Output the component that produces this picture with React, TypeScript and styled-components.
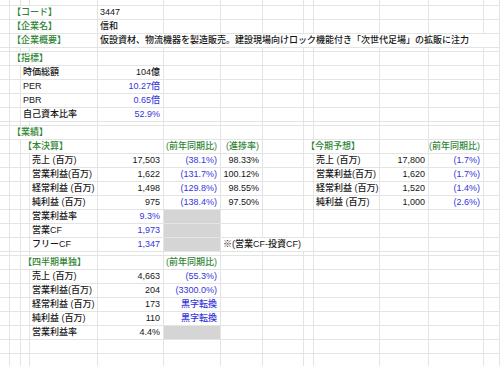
import * as React from "react";
import styled, { createGlobalStyle } from "styled-components";

type Tone = "text" | "green" | "blue";

interface ICell {
  c: number;
  s?: number;
  t?: string;
  right?: boolean;
  tone?: Tone;
  fill?: boolean;
}

interface IRow {
  h: number;
  cells: ICell[];
}

const COLUMNS = "10px 11px 9px 68px 66px 57px 42px 41px 10px 66px 49px 55px 1fr";
const COLUMN_COUNT = 13;

const G = (c: number, t: string, s = 1): ICell => ({ c, s, t, tone: "green" });
const L = (c: number, t: string, s = 1): ICell => ({ c, s, t });
const N = (c: number, t: string, tone: Tone = "text"): ICell => ({ c, t, right: true, tone });
const GR = (c: number, t: string): ICell => ({ c, t, right: true, tone: "green" });
const GRAY = (c: number): ICell => ({ c, fill: true });

const rows: IRow[] = [
  { h: 6, cells: [] },
  { h: 14, cells: [G(1, "【コード】", 3), L(4, "3447")] },
  { h: 14, cells: [G(1, "【企業名】", 3), L(4, "信和")] },
  {
    h: 14,
    cells: [
      G(1, "【企業概要】", 3),
      L(4, "仮設資材、物流機器を製造販売。建設現場向けロック機能付き「次世代足場」の拡販に注力", 9),
    ],
  },
  { h: 4, cells: [] },
  { h: 14, cells: [G(1, "【指標】", 3)] },
  { h: 14, cells: [L(2, "時価総額", 2), N(4, "104億")] },
  { h: 14, cells: [L(2, "PER", 2), N(4, "10.27倍", "blue")] },
  { h: 14, cells: [L(2, "PBR", 2), N(4, "0.65倍", "blue")] },
  { h: 14, cells: [L(2, "自己資本比率", 2), N(4, "52.9%", "blue")] },
  { h: 4, cells: [] },
  { h: 14, cells: [G(1, "【業績】", 3)] },
  {
    h: 14,
    cells: [G(2, "【本決算】", 2), GR(5, "(前年同期比)"), GR(6, "(進捗率)"), G(8, "【今期予想】", 2), GR(11, "(前年同期比)")],
  },
  {
    h: 14,
    cells: [L(3, "売上 (百万)"), N(4, "17,503"), N(5, "(38.1%)", "blue"), N(6, "98.33%"), L(9, "売上 (百万)"), N(10, "17,800"), N(11, "(1.7%)", "blue")],
  },
  {
    h: 14,
    cells: [L(3, "営業利益(百万)"), N(4, "1,622"), N(5, "(131.7%)", "blue"), N(6, "100.12%"), L(9, "営業利益(百万)"), N(10, "1,620"), N(11, "(1.7%)", "blue")],
  },
  {
    h: 14,
    cells: [L(3, "経常利益 (百万)"), N(4, "1,498"), N(5, "(129.8%)", "blue"), N(6, "98.55%"), L(9, "経常利益 (百万)"), N(10, "1,520"), N(11, "(1.4%)", "blue")],
  },
  {
    h: 14,
    cells: [L(3, "純利益 (百万)"), N(4, "975"), N(5, "(138.4%)", "blue"), N(6, "97.50%"), L(9, "純利益 (百万)"), N(10, "1,000"), N(11, "(2.6%)", "blue")],
  },
  { h: 14, cells: [L(3, "営業利益率"), N(4, "9.3%", "blue"), GRAY(5)] },
  { h: 14, cells: [L(3, "営業CF"), N(4, "1,973", "blue"), GRAY(5)] },
  { h: 14, cells: [L(3, "フリーCF"), N(4, "1,347", "blue"), GRAY(5), L(6, "※(営業CF-投資CF)", 3)] },
  { h: 4, cells: [] },
  { h: 14, cells: [G(2, "【四半期単独】", 2), GR(5, "(前年同期比)")] },
  { h: 14, cells: [L(3, "売上 (百万)"), N(4, "4,663"), N(5, "(55.3%)", "blue")] },
  { h: 14, cells: [L(3, "営業利益(百万)"), N(4, "204"), N(5, "(3300.0%)", "blue")] },
  { h: 14, cells: [L(3, "経常利益 (百万)"), N(4, "173"), N(5, "黒字転換", "blue")] },
  { h: 14, cells: [L(3, "純利益 (百万)"), N(4, "110"), N(5, "黒字転換", "blue")] },
  { h: 14, cells: [L(3, "営業利益率"), N(4, "4.4%"), GRAY(5)] },
  { h: 14, cells: [] },
  { h: 14, cells: [] },
];

// pad a row out to every column, skipping the ones a spanning cell covers
const fillRow = (cells: ICell[]): ICell[] => {
  const out: ICell[] = [];
  let col = 0;
  const sorted = [...cells].sort((a, b) => a.c - b.c);
  for (const cell of sorted) {
    while (col < cell.c) out.push({ c: col++ });
    out.push(cell);
    col = cell.c + (cell.s ?? 1);
  }
  while (col < COLUMN_COUNT) out.push({ c: col++ });
  return out;
};

const App = () => {
  return (
    <>
      <GlobalStyle />
      <Sheet>
        {rows.map((row, i) => (
          <Row key={i} $h={row.h}>
            {fillRow(row.cells).map((cell) => (
              <Cell
                key={cell.c}
                $col={cell.c + 1}
                $span={cell.s ?? 1}
                $right={!!cell.right}
                $tone={cell.tone ?? "text"}
                $fill={!!cell.fill}
              >
                {cell.t}
              </Cell>
            ))}
          </Row>
        ))}
      </Sheet>
    </>
  );
};

const GlobalStyle = createGlobalStyle`
  html, body {
    margin: 0;
    padding: 0;
    background: #ffffff;
  }
  body {
    font-family: "Liberation Sans", "Noto Sans CJK JP", sans-serif;
    overflow: hidden;
  }
`;

const toneColors: Record<Tone, string> = {
  text: "#161616",
  green: "#2f8535",
  blue: "#3535dc",
};

const Sheet = styled.div`
  width: 500px;
  height: 366px;
  overflow: hidden;
  display: flex;
  flex-direction: column;
  background: #ffffff;
`;

const Row = styled.div<{ $h: number }>`
  display: grid;
  grid-template-columns: ${COLUMNS};
  height: ${(p) => p.$h}px;
  flex: none;
`;

const Cell = styled.div<{ $col: number; $span: number; $right: boolean; $tone: Tone; $fill: boolean }>`
  grid-column: ${(p) => p.$col} / span ${(p) => p.$span};
  box-sizing: border-box;
  display: flex;
  align-items: center;
  justify-content: ${(p) => (p.$right ? "flex-end" : "flex-start")};
  padding: 0 3px 0 2px;
  border-right: 1px solid #e4e4e4;
  border-bottom: 1px solid #e4e4e4;
  background: ${(p) => (p.$fill ? "#d5d5d5" : "transparent")};
  color: ${(p) => toneColors[p.$tone]};
  font-size: 9px;
  font-weight: 500;
  line-height: 1;
  white-space: nowrap;
  min-width: 0;
`;

export default App;
